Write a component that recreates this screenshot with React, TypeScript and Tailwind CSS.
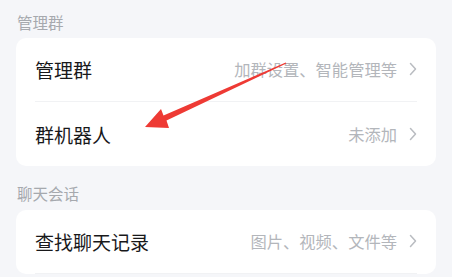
import React from "react";

const Chevron = () => (
  <svg width="8" height="14" viewBox="0 0 8 14" className="ml-[12px] shrink-0">
    <path d="M1.5 1.5 L6.5 7 L1.5 12.5" fill="none" stroke="#b9bcc1" strokeWidth="1.5" strokeLinecap="round" strokeLinejoin="round" />
  </svg>
);

const Row = ({ title, hint, divider }: { title: string; hint: string; divider?: boolean }) => (
  <div className="pl-[19px] pr-[19px]">
    <div className={"h-[64px] flex items-center justify-between " + (divider ? "border-b border-[#f1f2f4]" : "")}>
      <span className="text-[19px] text-[#18181a] leading-none">{title}</span>
      <div className="flex items-center">
        <span className="text-[16.3px] text-[#b3b6bb] leading-none">{hint}</span>
        <Chevron />
      </div>
    </div>
  </div>
);

export default function App() {
  return (
    <div
      className="relative w-[452px] h-[277px] overflow-hidden bg-[#f5f6f9] px-4"
      style={{ fontFamily: '"Noto Sans CJK SC", "Noto Sans", sans-serif' }}
    >
      <div className="h-[38px] pt-[8px] flex items-center pl-[1px] text-[15.5px] text-[#a6a9ae]">管理群</div>
      <div className="bg-white rounded-[10px]">
        <Row title="管理群" hint="加群设置、智能管理等" divider />
        <Row title="群机器人" hint="未添加" />
      </div>
      <div className="h-[44px] pt-[12px] flex items-center pl-[1px] text-[15.5px] text-[#a6a9ae]">聊天会话</div>
      <div className="bg-white rounded-[10px]">
        <Row title="查找聊天记录" hint="图片、视频、文件等" divider />
      </div>
      <svg className="absolute left-0 top-0 pointer-events-none" width="452" height="277" viewBox="0 0 452 277">
        <polygon
          points="145,127 169,128 166.5,120.5 286.3,63.6 285.7,62.4 163.5,115.5 161,109"
          fill="#ee3a34"
        />
      </svg>
    </div>
  );
}
